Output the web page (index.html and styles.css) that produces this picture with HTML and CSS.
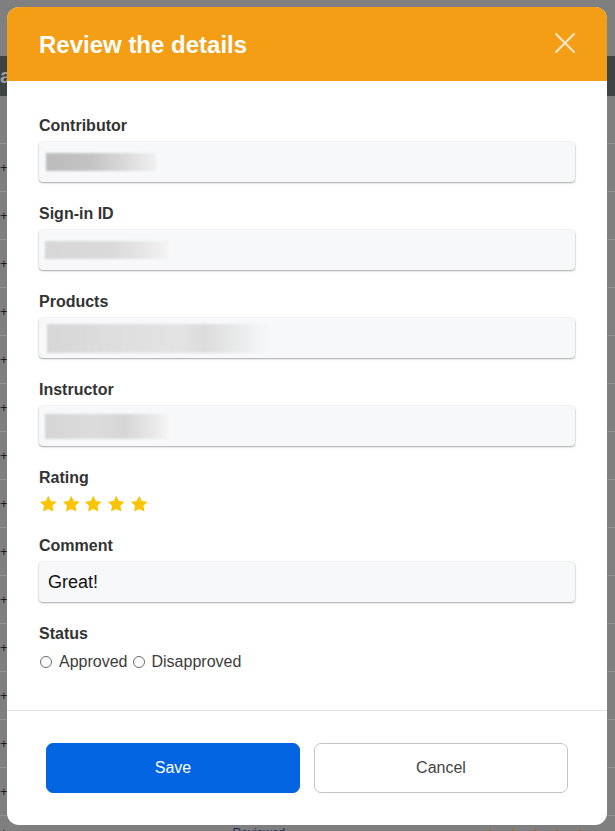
FILE: index.html
```html
<!DOCTYPE html>
<html lang="en">
<head>
<meta charset="utf-8">
<title>Review the details</title>
<link rel="stylesheet" href="styles.css">
</head>
<body>
<div class="page">
  <div class="page-top"></div>
  <div class="page-bar"><span class="bar-text">a</span></div>
  <div class="page-gap"></div>
  <div class="rows">
    <div class="row"><span class="plus">+</span></div>
    <div class="row"><span class="plus">+</span></div>
    <div class="row"><span class="plus">+</span></div>
    <div class="row"><span class="plus">+</span></div>
    <div class="row"><span class="plus">+</span></div>
    <div class="row"><span class="plus">+</span></div>
    <div class="row"><span class="plus">+</span></div>
    <div class="row"><span class="plus">+</span></div>
    <div class="row"><span class="plus">+</span></div>
    <div class="row"><span class="plus">+</span></div>
    <div class="row"><span class="plus">+</span></div>
    <div class="row"><span class="plus">+</span></div>
    <div class="row"><span class="plus">+</span></div>
    <div class="row"><span class="plus">+</span></div>
    <div class="row row-last"><span class="plus">+</span><span class="row-link">Reviewed</span><span class="row-tags">★ ★ ★ ★ ★</span></div>
  </div>
</div>

<div class="modal" role="dialog" aria-labelledby="modal-title">
  <header class="modal-header">
    <h1 id="modal-title" class="modal-title">Review the details</h1>
    <button class="close-btn" aria-label="Close">
      <svg width="20" height="20" viewBox="0 0 20 20"><path d="M1 1L19 19M19 1L1 19" stroke="currentColor" stroke-width="2.2" stroke-linecap="square" fill="none"/></svg>
    </button>
  </header>

  <div class="modal-body">
    <div class="field">
      <div class="label">Contributor</div>
      <div class="input"><span class="blur blur-contrib"></span></div>
    </div>
    <div class="field">
      <div class="label">Sign-in ID</div>
      <div class="input"><span class="blur blur-signin"></span></div>
    </div>
    <div class="field">
      <div class="label">Products</div>
      <div class="input"><span class="blur blur-products"></span></div>
    </div>
    <div class="field">
      <div class="label">Instructor</div>
      <div class="input"><span class="blur blur-instructor"></span></div>
    </div>
    <div class="field">
      <div class="label">Rating</div>
      <div class="stars">
        <svg class="star" viewBox="0 0 24 24"><path d="M12 1l3.3 6.8 7.5 1.1-5.4 5.2 1.3 7.4L12 18l-6.7 3.5 1.3-7.4L1.2 8.9l7.5-1.1z"/></svg>
        <svg class="star" viewBox="0 0 24 24"><path d="M12 1l3.3 6.8 7.5 1.1-5.4 5.2 1.3 7.4L12 18l-6.7 3.5 1.3-7.4L1.2 8.9l7.5-1.1z"/></svg>
        <svg class="star" viewBox="0 0 24 24"><path d="M12 1l3.3 6.8 7.5 1.1-5.4 5.2 1.3 7.4L12 18l-6.7 3.5 1.3-7.4L1.2 8.9l7.5-1.1z"/></svg>
        <svg class="star" viewBox="0 0 24 24"><path d="M12 1l3.3 6.8 7.5 1.1-5.4 5.2 1.3 7.4L12 18l-6.7 3.5 1.3-7.4L1.2 8.9l7.5-1.1z"/></svg>
        <svg class="star" viewBox="0 0 24 24"><path d="M12 1l3.3 6.8 7.5 1.1-5.4 5.2 1.3 7.4L12 18l-6.7 3.5 1.3-7.4L1.2 8.9l7.5-1.1z"/></svg>
      </div>
    </div>
    <div class="field">
      <div class="label">Comment</div>
      <div class="input input-text">Great!</div>
    </div>
    <div class="field field-last">
      <div class="label">Status</div>
      <div class="radios">
        <label class="radio"><span class="radio-dot"></span><span class="radio-text">Approved</span></label>
        <label class="radio"><span class="radio-dot"></span><span class="radio-text">Disapproved</span></label>
      </div>
    </div>
  </div>

  <footer class="modal-footer">
    <button class="btn btn-primary">Save</button>
    <button class="btn btn-secondary">Cancel</button>
  </footer>
</div>
</body>
</html>
```

FILE: styles.css
```css
* { box-sizing: border-box; }

html, body {
  margin: 0;
  padding: 0;
}

body {
  width: 615px;
  height: 831px;
  overflow: hidden;
  background: #7f7f7f;
  font-family: "Liberation Sans", Arial, sans-serif;
  position: relative;
}

/* dimmed page underneath */
.page {
  width: 100%;
}
.page-top { height: 56px; }
.page-bar {
  height: 40px;
  background: #3e4443;
  color: #9aa0a0;
  font-size: 20px;
  font-weight: bold;
  line-height: 40px;
}
.page-gap { height: 47px; }
.row {
  height: 48px;
  border-top: 1px solid #939393;
  display: flex;
  align-items: center;
  position: relative;
}
.plus {
  color: #1e1e1e;
  font-size: 13px;
  line-height: 1;
}
.row-last { align-items: flex-start; padding-top: 10px; }
.row-link {
  margin-left: 225px;
  font-size: 12px;
  color: #1b2a55;
}
.row-tags {
  margin-left: 200px;
  font-size: 12px;
  color: #a56a10;
  letter-spacing: 4px;
}

/* modal */
.modal {
  position: absolute;
  top: 7px;
  left: 7px;
  width: 600px;
  height: 818px;
  background: #ffffff;
  border-radius: 12px;
  overflow: hidden;
  display: flex;
  flex-direction: column;
}

.modal-header {
  height: 74px;
  flex: 0 0 74px;
  background: #f39e14;
  display: flex;
  align-items: center;
  justify-content: space-between;
  padding: 0 32px;
}

.modal-title {
  margin: 0;
  color: #ffffff;
  font-size: 24px;
  font-weight: bold;
  line-height: 28px;
  padding-top: 1px;
}

.close-btn {
  border: 0;
  background: none;
  padding: 0;
  width: 20px;
  height: 20px;
  color: #fde6c6;
  display: flex;
  margin-top: -2px;
}

.modal-body {
  flex: 0 0 auto;
  padding: 35px 32px 37px;
  border-bottom: 1px solid #e2e2e2;
}

.field { margin-bottom: 22px; }
.field-last { margin-bottom: 0; }

.label {
  font-size: 16px;
  line-height: 20px;
  font-weight: bold;
  color: #333333;
  margin-bottom: 6px;
}

.input {
  height: 40px;
  background: #f7f8fa;
  border-radius: 4px;
  box-shadow: 0 1px 2px rgba(0, 0, 0, 0.32), 0 0 0 1px rgba(0, 0, 0, 0.035);
  display: flex;
  align-items: center;
  padding-left: 7px;
}

.input-text {
  padding-left: 9px;
  font-size: 18px;
  color: #111111;
  padding-top: 1px;
}

.blur {
  display: block;
  filter: blur(1px);
}
.blur-contrib {
  width: 110px;
  height: 18px;
  background: linear-gradient(90deg, #bcbcbc 0%, #c3c3c3 40%, #dcdcdc 75%, #f0f0f0 100%);
}
.blur-signin {
  width: 123px;
  height: 18px;
  margin-left: -1px;
  background: linear-gradient(90deg, #d7d7d7 0%, #dadada 55%, #e6e6e6 80%, #f4f4f4 100%);
}
.blur-products {
  width: 220px;
  height: 29px;
  margin-left: 1px;
  background: linear-gradient(90deg, #d6d6d6 0%, #dedede 30%, #e3e3e3 60%, #dcdcdc 72%, #f6f7f8 100%);
}
.blur-instructor {
  width: 123px;
  height: 25px;
  margin-left: -1px;
  background: linear-gradient(90deg, #d5d5d5 0%, #dcdcdc 40%, #d6d6d6 65%, #e6e6e6 85%, #f4f4f4 100%);
}

.stars {
  height: 20px;
  display: flex;
  align-items: center;
  gap: 4.2px;
}
.star {
  width: 18.5px;
  height: 18.5px;
  fill: #fbc400;
}

.radios {
  height: 23px;
  padding-top: 1px;
  display: flex;
  align-items: center;
}
.radio {
  display: flex;
  align-items: center;
  margin-right: 5px;
}
.radio:first-child { margin-left: 1px; }
.radio-dot {
  width: 12px;
  height: 12px;
  border: 1px solid #6b6b6b;
  border-radius: 50%;
  background: #ffffff;
  margin-right: 7px;
}
.radio-text {
  font-size: 16px;
  color: #3c3c3c;
  line-height: 20px;
}

.modal-footer {
  flex: 1 1 auto;
  display: flex;
  gap: 14px;
  padding: 32px 39px 32px;
}

.btn {
  flex: 1 1 0;
  height: 50px;
  border-radius: 7px;
  font-family: "Liberation Sans", Arial, sans-serif;
  font-size: 16px;
  cursor: pointer;
}
.btn-primary {
  background: #0264e0;
  border: 1px solid #0264e0;
  color: #ffffff;
}
.btn-secondary {
  background: #ffffff;
  border: 1px solid #c4c4c4;
  color: #444444;
}
```
